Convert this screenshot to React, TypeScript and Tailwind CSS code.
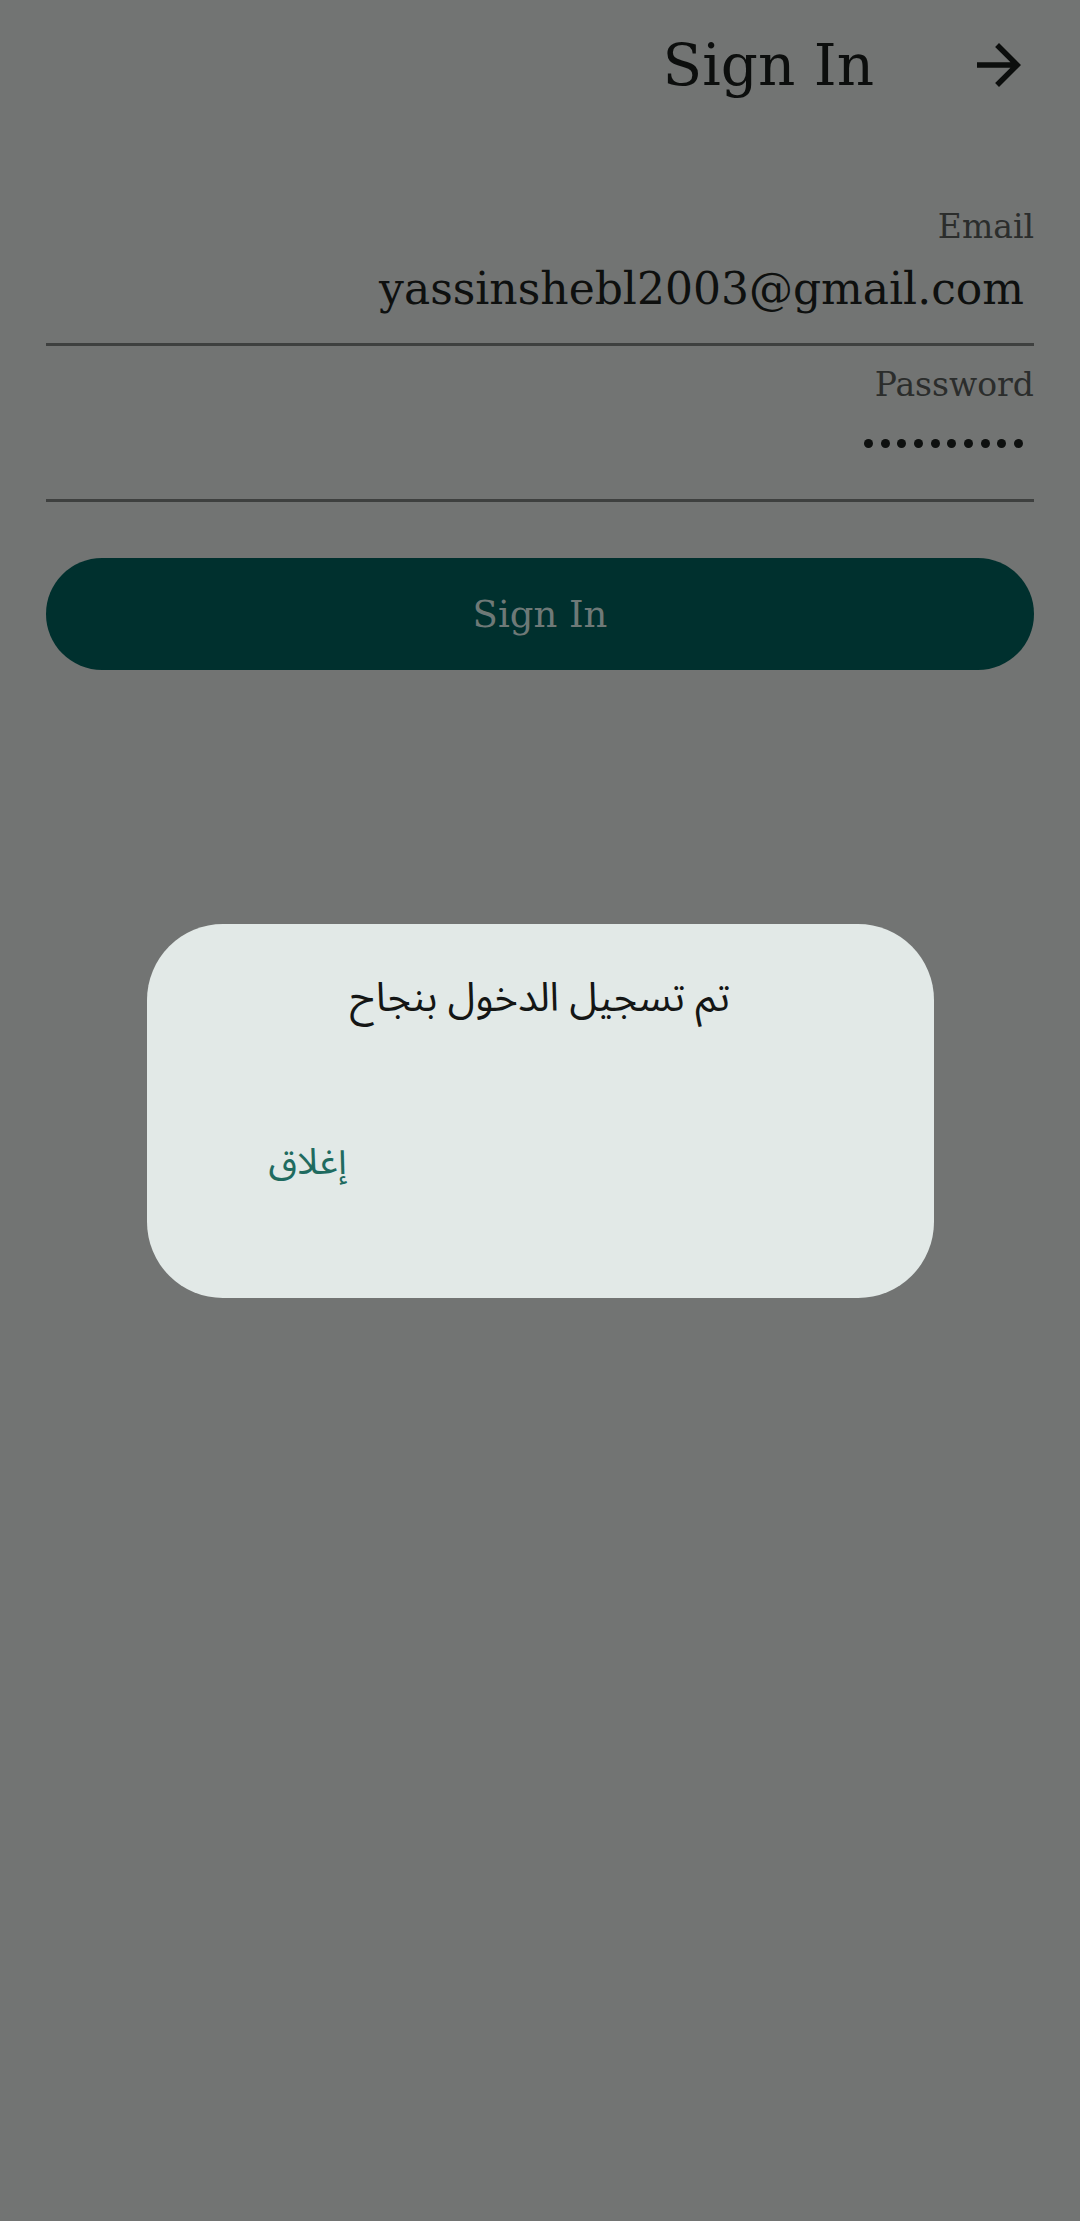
import React from "react";

const serif = "font-['DejaVu_Serif',serif]";

export default function App() {
  return (
    <div className="relative min-h-[2221px] w-full bg-[#727473]">
      {/* App bar */}
      <div className="flex h-[130px] items-center justify-end pr-[48px]">
        <span className={`${serif} mr-[92px] text-[58px] leading-none text-[#0c0e0d]`}>Sign In</span>
        <svg viewBox="0 0 24 24" className="h-[66px] w-[66px]" fill="#0c0e0d">
          <path d="M12 4l-1.41 1.41L16.17 11H4v2h12.17l-5.58 5.59L12 20l8-8z" />
        </svg>
      </div>

      {/* Form */}
      <div className={`${serif} flex flex-col px-[46px] text-right`}>
        <div className="mt-[80px] text-[33px] leading-none text-[#2b2d2c]">Email</div>
        <div className="mt-[24px] pr-[10px] text-[44px] leading-none text-[#0e100f]">yassinshebl2003@gmail.com</div>
        <div className="mt-[32px] h-[3px] w-full bg-[#3e403f]" />

        <div className="mt-[22px] text-[33px] leading-none text-[#2b2d2c]">Password</div>
        <div className="mt-[38px] flex justify-end gap-[7.7px] pr-[11px]">
          {Array.from({ length: 10 }).map((_, i) => (
            <span key={i} className="block h-[9px] w-[9px] rounded-full bg-[#0e100f]" />
          ))}
        </div>
        <div className="mt-[51px] h-[3px] w-full bg-[#3e403f]" />

        <div className="mt-[56px] flex h-[112px] items-center justify-center rounded-full bg-[#00302e]">
          <span className="text-[37px] leading-none text-[#6e7977]">Sign In</span>
        </div>
      </div>

      {/* Dialog overlay */}
      <div className="absolute inset-0 flex items-center justify-center">
        <div
          dir="rtl"
          className="flex h-[374px] w-[787px] flex-col rounded-[76px] bg-[#e2e9e7] font-['Noto_Sans_Arabic','Noto_Naskh_Arabic','DejaVu_Sans',sans-serif]"
        >
          <div className="pt-[55px] text-center text-[40px] leading-none text-[#141615]">
            تم تسجيل الدخول بنجاح
          </div>
          <div className="mt-[125px] flex justify-end pl-[122px]">
            <button className="text-[37px] leading-none text-[#1f6b60]">إغلاق</button>
          </div>
        </div>
      </div>
    </div>
  );
}
